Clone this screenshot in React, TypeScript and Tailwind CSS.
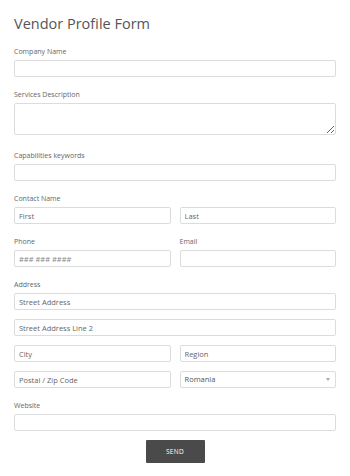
import React from 'react';

const inputCls =
  "block w-full h-[17px] border border-[#dcdcdc] rounded-[2px] bg-white px-[4px] text-[7.5px] text-[#555] placeholder:text-[#666] outline-none";

const Label = ({ children }: { children: React.ReactNode }) => (
  <label className="block text-[7px] leading-[10px] text-[#666] mb-[3px]">{children}</label>
);

const App = () => {
  return (
    <div className="min-h-screen bg-white" style={{ fontFamily: '"Open Sans", "Noto Sans", sans-serif' }}>
      <form className="px-[14px] pt-[14px]" onSubmit={(e) => e.preventDefault()}>
        <h1 className="text-[14.5px] leading-[20px] text-[#555] font-normal mb-[13px]">Vendor Profile Form</h1>

        <div>
          <Label>Company Name</Label>
          <input className={inputCls} />
        </div>

        <div className="mt-[13px] pb-[3px]">
          <Label>Services Description</Label>
          <textarea className="block w-full h-[32px] border border-[#dcdcdc] rounded-[2px] bg-white px-[4px] text-[7.5px] outline-none resize-y" />
        </div>

        <div className="mt-[13px]">
          <Label>Capabilities keywords</Label>
          <input className={inputCls} />
        </div>

        <div className="mt-[13px]">
          <Label>Contact Name</Label>
          <div className="grid grid-cols-2 gap-[9px]">
            <input className={inputCls} placeholder="First" />
            <input className={inputCls} placeholder="Last" />
          </div>
        </div>

        <div className="mt-[13px] grid grid-cols-2 gap-[9px]">
          <div>
            <Label>Phone</Label>
            <input className={inputCls + " placeholder:text-[#888]"} placeholder="### ### ####" />
          </div>
          <div>
            <Label>Email</Label>
            <input className={inputCls} />
          </div>
        </div>

        <div className="mt-[13px]">
          <Label>Address</Label>
          <div className="flex flex-col gap-[9px]">
            <input className={inputCls} placeholder="Street Address" />
            <input className={inputCls} placeholder="Street Address Line 2" />
            <div className="grid grid-cols-2 gap-[9px]">
              <input className={inputCls} placeholder="City" />
              <input className={inputCls} placeholder="Region" />
            </div>
            <div className="grid grid-cols-2 gap-[9px]">
              <input className={inputCls} placeholder="Postal / Zip Code" />
              <div className="relative">
                <div className="flex items-center h-[17px] border border-[#dcdcdc] rounded-[2px] bg-white px-[4px] text-[7.5px] text-[#555]">
                  Romania
                </div>
                <span className="absolute right-[6px] top-[7px] w-0 h-0 border-l-[2.5px] border-r-[2.5px] border-t-[3px] border-l-transparent border-r-transparent border-t-[#aaa]" />
              </div>
            </div>
          </div>
        </div>

        <div className="mt-[13px]">
          <Label>Website</Label>
          <input className={inputCls} />
        </div>

        <div className="flex justify-center mt-[9px]">
          <button type="submit" className="w-[59px] h-[23px] bg-[#4a4a4a] rounded-[1px] text-white text-[6.5px] tracking-[0.3px]">
            SEND
          </button>
        </div>
      </form>
    </div>
  );
};

export default App;
